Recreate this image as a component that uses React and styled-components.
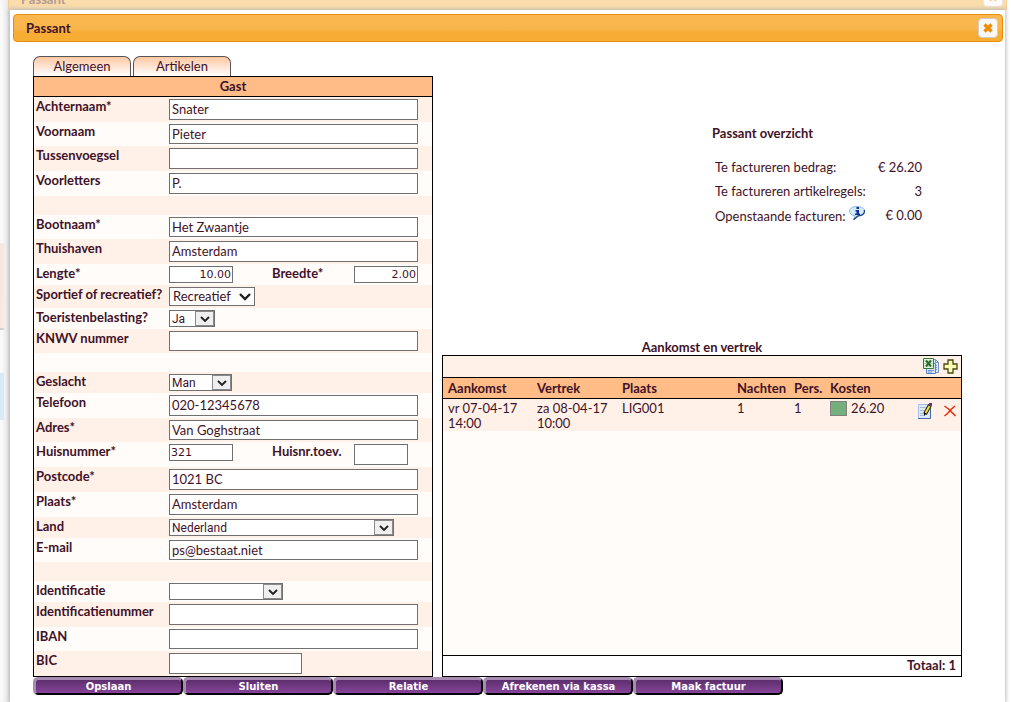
import React from 'react';
import styled, { createGlobalStyle } from 'styled-components';

const text = '#3f1228';
const stripe = '#fff1e8';
const plain = '#fffcf9';
const heading = '#ffbc87';

const GlobalStyle = createGlobalStyle`
* {
    box-sizing: border-box;
}
body {
    margin: 0;
    background: #fff;
    color: ${text};
    font-family: "Century Gothic", Lato, sans-serif;
    font-size: 13px;
    line-height: 15px;
}
`;

const Page = styled.div`
min-height: 100vh;
display: flex;
flex-direction: column;
overflow: hidden;
background:
    linear-gradient(#f7e6de, #f9e9e1) 0 243px / 4px 85px no-repeat,
    linear-gradient(#d3d3d3, #d3d3d3) 0 328px / 4px 2px no-repeat,
    linear-gradient(#d9eaf6, #d9eaf6) 0 373px / 4px 47px no-repeat,
    linear-gradient(90deg, #fbfbfb 0, #f4f4f4 4px, #ececec 7px, #d9d9d9 10px, #fff 11px);
`;

const BackTitle = styled.div`
height: 10px;
margin: 0 4px 0 8px;
padding: 0 3px 2px 12px;
display: flex;
align-items: flex-end;
justify-content: space-between;
overflow: hidden;
color: #b59a94;
font-weight: bold;
line-height: 16px;
background: #fbdcab;
border: solid #f5cd97;
border-width: 0 1px 1px;
`;

const BackClose = styled.span`
width: 20px;
height: 20px;
display: flex;
align-items: center;
justify-content: center;
background: #fefcfa;
border: 1px solid #eee6dc;
border-radius: 4px;
`;

const Dialog = styled.section`
flex: 1;
margin: 0 6px 0 10px;
padding: 4px 2px 7px 3px;
background: #fff;
box-shadow: 0 0 4px 1px #bbb;
`;

const TitleBar = styled.header`
height: 28px;
padding: 0 4px 0 12px;
display: flex;
align-items: center;
justify-content: space-between;
background: linear-gradient(#f9b84f 0, #f8b54b 55%, #f7ad35 65%, #f7ac33 100%);
border: 1px solid #e78f08;
border-radius: 4px;
`;

const Title = styled.h1`
margin: 0;
font-size: 13px;
font-weight: bold;
`;

const CloseButton = styled.button`
width: 20px;
height: 20px;
padding: 0;
display: flex;
align-items: center;
justify-content: center;
background: #f8f8f8;
border: 1px solid #d4ccc0;
border-radius: 4px;
`;

const Body = styled.div`
padding: 14px 41px 0 20px;
`;

const Tabs = styled.nav`
display: flex;
gap: 2px;
`;

const Tab = styled.button`
width: 98px;
height: 20px;
padding: 0;
color: ${text};
font: inherit;
background: linear-gradient(#ffc8a4, #fff);
border: 1px solid #555;
border-bottom: 0;
border-radius: 7px 7px 0 0;
`;

const Columns = styled.div`
display: grid;
grid-template-columns: 10fr 13fr;
gap: 9px;
`;

const Panel = styled.form`
border: 1px solid #000;
`;

const PanelTitle = styled.h2`
height: 20px;
margin: 0;
font-size: 13px;
line-height: 19px;
text-align: center;
background: ${heading};
border-bottom: 1px solid #000;
`;

const Row = styled.div`
height: ${props => props.$height}px;
padding: 2px 14px 2px 2px;
display: grid;
grid-template-columns: 133px 1fr;
background: ${plain};
&:nth-of-type(odd) {
    background: ${stripe};
}
`;

const Label = styled.label`
font-weight: bold;
white-space: nowrap;
`;

const Fields = styled.div`
display: flex;
justify-content: space-between;
`;

const SecondField = styled.div`
width: 146px;
display: grid;
grid-template-columns: 82px 1fr;
`;

const Input = styled.input`
width: ${props => props.$width || '100%'};
height: ${props => (props.$small ? '17px' : '100%')};
padding: ${props => (props.$small ? '0 1px' : '0 2px 1px')};
color: ${text};
font: ${props => (props.$small ? '11px Verdana, "DejaVu Sans", sans-serif' : 'inherit')};
text-align: ${props => (props.$right ? 'right' : 'left')};
background: #fff;
border: 1px solid #707070;
border-radius: 0;
outline: 0;
`;

const SelectBox = styled.div`
position: relative;
width: ${props => props.$width}px;
height: 100%;
`;

const StyledSelect = styled.select`
width: 100%;
height: 100%;
padding: 0 ${props => (props.$flat ? '3px' : '2px')};
display: block;
appearance: none;
color: ${text};
font: ${props => (props.$flat ? 'inherit' : '12px Tahoma, Roboto, sans-serif')};
background: #fff;
border: 1px solid #707070;
border-radius: 0;
`;

const Arrow = styled.span`
position: absolute;
top: 1px;
right: 1px;
bottom: 1px;
width: 19px;
display: flex;
align-items: center;
justify-content: center;
pointer-events: none;
background: ${props => (props.$flat ? 'none' : '#efefef')};
border: ${props => (props.$flat ? '0' : '1px solid #8a8a8a')};
`;

const Side = styled.div`
display: flex;
flex-direction: column;
justify-content: space-between;
`;

const Overview = styled.section`
width: 210px;
margin: 50px 40px 0 auto;
`;

const OverviewTitle = styled.h2`
margin: 0 0 14px;
font-size: 13px;
`;

const OverviewRow = styled.div`
height: 24px;
padding-left: 3px;
display: flex;
align-items: center;
justify-content: space-between;
white-space: nowrap;
`;

const IconButton = styled.button`
width: 16px;
height: 16px;
padding: 0;
vertical-align: ${props => (props.$raised ? '-1px' : 'top')};
background: none;
border: 0;
svg {
    display: block;
}
`;

const ListTitle = styled.h2`
margin: 0;
font-size: 13px;
text-align: center;
`;

const ListBox = styled.div`
height: 322px;
display: flex;
flex-direction: column;
background: ${plain};
border: 1px solid #000;
`;

const Toolbar = styled.div`
height: 21px;
padding: 2px 3px;
display: flex;
justify-content: flex-end;
gap: 3px;
background: ${stripe};
`;

const Table = styled.table`
width: 100%;
table-layout: fixed;
border-collapse: collapse;
th {
    height: 21px;
    padding: 0 0 0 5px;
    text-align: left;
    white-space: nowrap;
    background: ${heading};
    border: solid #000;
    border-width: 1px 0;
}
td {
    height: 32px;
    padding: 2px 0 0 5px;
    vertical-align: top;
    background: ${stripe};
}
`;

const Col = styled.col`
width: ${props => props.$width}px;
`;

const Swatch = styled.span`
width: 17px;
height: 15px;
margin-right: 4px;
display: inline-block;
vertical-align: top;
background: #75b07b;
border: 1px solid #808080;
`;

const RowActions = styled.div`
padding: 2px 3px 0 0;
display: flex;
justify-content: flex-end;
gap: 9px;
`;

const Total = styled.div`
height: 21px;
margin-top: auto;
padding: 2px 5px;
font-weight: bold;
text-align: right;
background: #fff;
border-top: 1px solid #000;
`;

const Actions = styled.div`
display: flex;
`;

const Action = styled.button`
width: 150px;
height: 18px;
padding: 0;
color: #fff;
font: bold 10px Verdana, "DejaVu Sans", sans-serif;
white-space: nowrap;
background: linear-gradient(#5c2f6c, #86439a);
border: solid;
border-width: 3px 2px 2px 3px;
border-color: #a88bb3 #000 #000 #a88bb3;
border-radius: 5px;
`;

const CrossIcon = ({ color }) => (
    <svg width="10" height="10" viewBox="0 0 10 10">
        <path d="M1.500 1.500l7 7M8.500 1.500l-7 7" stroke={color} strokeWidth="3.400" />
    </svg>
);

const InfoIcon = () => (
    <svg width="16" height="16" viewBox="0 0 16 16">
        <path d="M8 .5C3.500.5.5 2.500.5 5.200c0 2.300 2 4.200 5.500 4.600L4.500 13.500l4.500-3.600c4 0 6.500-2 6.500-4.700S12.500.5 8 .5z" fill="#d3ebfd" stroke="#8fb8e2" />
        <path d="M15.300 4c.8 3.500-2 5.900-6.300 5.900l-4.500 3.900" fill="none" stroke="#1b4283" strokeWidth="1.300" />
        <path d="M7.500 1H10v2H7.500zM6.500 4H10v3.500h1V9H6V7.500h1.500v-2h-1z" fill="#0c2f96" />
    </svg>
);

const ExcelIcon = () => (
    <svg width="16" height="16" viewBox="0 0 16 16">
        <path d="M7.500 1.500h5l3 3v10h-8z" fill="#e2edfc" stroke="#6f94cf" />
        <path d="M12.500 1.500v3h3" fill="none" stroke="#6f94cf" />
        <path d="M3.500 5.500h9v10h-9z" fill="#d8e6fb" stroke="#5b83c4" />
        <path d="M5 12.500h6M5 14h4M14 7.500h-1M14 9.500h-1M14 11.500h-1" stroke="#6f94cf" />
        <path d="M.5.500h10v10H.5z" fill="#eaf4e4" stroke="#397a37" />
        <path d="M1 3h9M1 5.500h9M1 8h9" stroke="#b7d5ae" />
        <path d="M3 2.500l5 6M8 2.500l-5 6" stroke="#2a7030" strokeWidth="2" />
    </svg>
);

const PlusIcon = () => (
    <svg width="16" height="16" viewBox="0 0 16 16">
        <path d="M6 2h5v4h4v5h-4v4H6v-4H2V6h4z" fill="#fbfbb4" stroke="#454815" strokeWidth="1.300" />
    </svg>
);

const EditIcon = () => (
    <svg width="16" height="16" viewBox="0 0 16 16">
        <path d="M1.500 1.500h12v14h-12z" fill="#dfeafb" stroke="#a5bfe5" />
        <path d="M1 15.500h12.500V3" fill="none" stroke="#47699f" />
        <path d="M3 4.500h6M3 7.500h5M3 10.500h4M3 12.500h5" stroke="#a9b9d1" />
        <path d="M13 2L8 11" stroke="#222" strokeWidth="4" />
        <path d="M12.500 3L8.500 10" stroke="#f3e52a" strokeWidth="2" />
        <path d="M12 0h3v3l-3-1.500z" fill="#8c1d7c" />
        <path d="M7 9l2 2-2 2z" fill="#111" />
    </svg>
);

const DeleteIcon = () => (
    <svg width="16" height="14" viewBox="0 0 16 14">
        <path d="M2.500 2l4 3 3 3 4 4M13 2L9 5.500 6 9l-3.500 3" fill="none" stroke="#e82c0c" strokeWidth="1.500" />
    </svg>
);

const Select = ({ id, value, width, flat }) => (
    <SelectBox $width={width}>
        <StyledSelect id={id} defaultValue={value} $flat={flat}>
            <option value={value}>{value}</option>
        </StyledSelect>
        <Arrow $flat={flat}>
            <svg width="12" height="8" viewBox="0 0 12 8">
                <path
                    d={flat ? 'M1 1l5 5 5-5' : 'M2 2l4 4 4-4'}
                    fill="none"
                    stroke="#222"
                    strokeWidth={flat ? 2.4 : 1.9}
                />
            </svg>
        </Arrow>
    </SelectBox>
);

// rows without a label are spacers between the groups
const rows = [
    { id: 'achternaam', label: 'Achternaam*', value: 'Snater', height: 25 },
    { id: 'voornaam', label: 'Voornaam', value: 'Pieter', height: 24 },
    { id: 'tussenvoegsel', label: 'Tussenvoegsel', value: '', height: 25 },
    { id: 'voorletters', label: 'Voorletters', value: 'P.', height: 25 },
    { id: 'spacer-boot', height: 19 },
    { id: 'bootnaam', label: 'Bootnaam*', value: 'Het Zwaantje', height: 24 },
    { id: 'thuishaven', label: 'Thuishaven', value: 'Amsterdam', height: 25 },
    {
        id: 'lengte', label: 'Lengte*', value: '10.00', height: 21, width: '64px', small: true, right: true,
        second: { id: 'breedte', label: 'Breedte*', value: '2.00', width: '64px', small: true, right: true },
    },
    { id: 'sportief', label: 'Sportief of recreatief?', value: 'Recreatief', height: 23, select: 86, flat: true },
    { id: 'belasting', label: 'Toeristenbelasting?', value: 'Ja', height: 21, select: 46 },
    { id: 'knwv', label: 'KNWV nummer', value: '', height: 24 },
    { id: 'spacer-persoon', height: 19 },
    { id: 'geslacht', label: 'Geslacht', value: 'Man', height: 21, select: 63 },
    { id: 'telefoon', label: 'Telefoon', value: '020-12345678', height: 25 },
    { id: 'adres', label: 'Adres*', value: 'Van Goghstraat', height: 24 },
    {
        id: 'huisnummer', label: 'Huisnummer*', value: '321', height: 25, width: '64px', small: true,
        second: { id: 'toevoeging', label: 'Huisnr.toev.', value: '', width: '54px' },
    },
    { id: 'postcode', label: 'Postcode*', value: '1021 BC', height: 25 },
    { id: 'plaats', label: 'Plaats*', value: 'Amsterdam', height: 25 },
    { id: 'land', label: 'Land', value: 'Nederland', height: 21, select: 225 },
    { id: 'email', label: 'E-mail', value: 'ps@bestaat.niet', height: 24 },
    { id: 'spacer-id', height: 19 },
    { id: 'identificatie', label: 'Identificatie', value: '', height: 21, select: 114 },
    { id: 'idnummer', label: 'Identificatienummer', value: '', height: 25 },
    { id: 'iban', label: 'IBAN', value: '', height: 24 },
    { id: 'bic', label: 'BIC', value: '', height: 25, width: '133px' },
];

const columns = [
    { title: 'Aankomst', width: 89 },
    { title: 'Vertrek', width: 85 },
    { title: 'Plaats', width: 115 },
    { title: 'Nachten', width: 57 },
    { title: 'Pers.', width: 36 },
    { title: 'Kosten', width: 72 },
    { title: '', width: 64 },
];

const actions = ['Opslaan', 'Sluiten', 'Relatie', 'Afrekenen via kassa', 'Maak factuur'];

const Field = ({ field }) => {
    if (field.select) {
        return <Select id={field.id} value={field.value} width={field.select} flat={field.flat} />;
    }
    return (
        <Input
            id={field.id}
            type="text"
            defaultValue={field.value}
            $width={field.width}
            $small={field.small}
            $right={field.right}
        />
    );
};

const FormRow = ({ row }) => (
    <Row $height={row.height}>
        {row.label && <Label htmlFor={row.id}>{row.label}</Label>}
        {row.label && (
            <Fields>
                <Field field={row} />
                {row.second && (
                    <SecondField>
                        <Label htmlFor={row.second.id}>{row.second.label}</Label>
                        <Field field={row.second} />
                    </SecondField>
                )}
            </Fields>
        )}
    </Row>
);

const Bookings = () => (
    <Table>
        <colgroup>
            {columns.map(column => <Col key={column.title} $width={column.width} />)}
        </colgroup>
        <thead>
            <tr>
                {columns.map(column => <th key={column.title}>{column.title}</th>)}
            </tr>
        </thead>
        <tbody>
            <tr>
                <td>vr 07-04-17<br />14:00</td>
                <td>za 08-04-17<br />10:00</td>
                <td>LIG001</td>
                <td>1</td>
                <td>1</td>
                <td><Swatch />26.20</td>
                <td>
                    <RowActions>
                        <IconButton type="button" aria-label="Wijzigen"><EditIcon /></IconButton>
                        <IconButton type="button" aria-label="Verwijderen"><DeleteIcon /></IconButton>
                    </RowActions>
                </td>
            </tr>
        </tbody>
    </Table>
);

class App extends React.Component {
    render() {
        return (
            <Page>
                <GlobalStyle />
                <BackTitle>
                    <span>Passant</span>
                    <BackClose><CrossIcon color="#fad5a5" /></BackClose>
                </BackTitle>
                <Dialog>
                    <TitleBar>
                        <Title>Passant</Title>
                        <CloseButton type="button" aria-label="Sluiten">
                            <CrossIcon color="#ef8c08" />
                        </CloseButton>
                    </TitleBar>
                    <Body>
                        <Tabs>
                            <Tab type="button">Algemeen</Tab>
                            <Tab type="button">Artikelen</Tab>
                        </Tabs>
                        <Columns>
                            <Panel>
                                <PanelTitle>Gast</PanelTitle>
                                {rows.map(row => <FormRow key={row.id} row={row} />)}
                            </Panel>
                            <Side>
                                <Overview>
                                    <OverviewTitle>Passant overzicht</OverviewTitle>
                                    <OverviewRow>
                                        <span>Te factureren bedrag:</span>
                                        <span>€ 26.20</span>
                                    </OverviewRow>
                                    <OverviewRow>
                                        <span>Te factureren artikelregels:</span>
                                        <span>3</span>
                                    </OverviewRow>
                                    <OverviewRow>
                                        <span>
                                            Openstaande facturen:{' '}
                                            <IconButton type="button" aria-label="Info" $raised><InfoIcon /></IconButton>
                                        </span>
                                        <span>€ 0.00</span>
                                    </OverviewRow>
                                </Overview>
                                <div>
                                    <ListTitle>Aankomst en vertrek</ListTitle>
                                    <ListBox>
                                        <Toolbar>
                                            <IconButton type="button" aria-label="Excel"><ExcelIcon /></IconButton>
                                            <IconButton type="button" aria-label="Toevoegen"><PlusIcon /></IconButton>
                                        </Toolbar>
                                        <Bookings />
                                        <Total>Totaal: 1</Total>
                                    </ListBox>
                                </div>
                            </Side>
                        </Columns>
                        <Actions>
                            {actions.map(action => <Action key={action} type="button">{action}</Action>)}
                        </Actions>
                    </Body>
                </Dialog>
            </Page>
        );
    }
}

export default App;
